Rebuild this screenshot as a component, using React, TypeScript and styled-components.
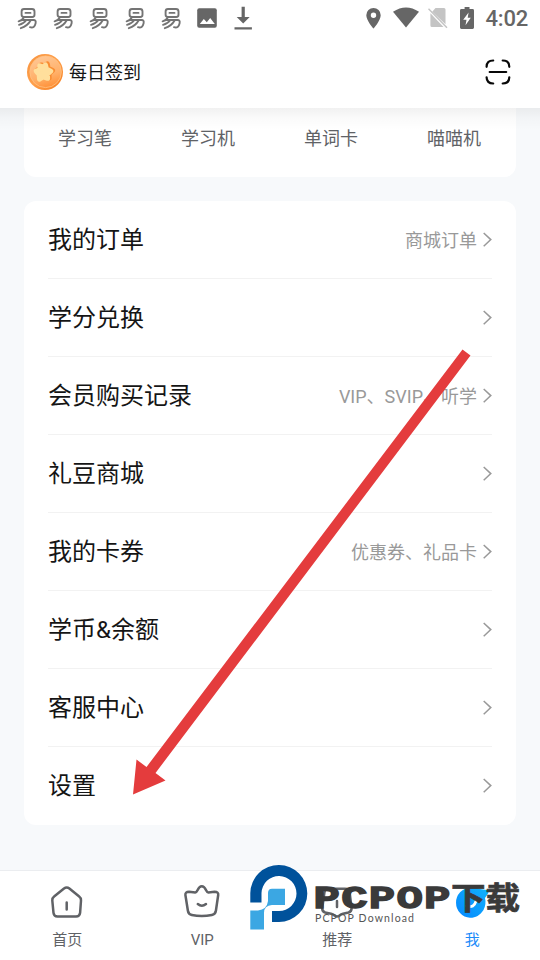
import React from "react";
import styled, { createGlobalStyle } from "styled-components";

const sans = `Roboto, "Noto Sans CJK SC", sans-serif`;

const GlobalStyle = createGlobalStyle`
  * { box-sizing: border-box; }
  body { margin: 0; background: #f7f9fb; font-family: ${sans}; }
`;

const Screen = styled.div`
  position: relative;
  display: flex;
  flex-direction: column;
  width: 540px;
  height: 960px;
  overflow: hidden;
  background: #f7f9fb;
`;

const StatusBar = styled.header`
  display: flex;
  justify-content: space-between;
  align-items: center;
  height: 36px;
  padding: 0 12px 0 15px;
  background: #fff;
  color: #666;
`;

const StatusGroup = styled.div<{ $gap: number }>`
  display: flex;
  align-items: center;
  gap: ${(p) => p.$gap}px;
`;

const Clock = styled.span`
  font-size: 22px;
  font-weight: 500;
  line-height: 36px;
  letter-spacing: -0.2px;
  margin-left: -1px;
  padding-top: 2px;
`;

const TopBar = styled.div`
  display: flex;
  align-items: center;
  height: 72px;
  padding: 0 28px 0 26px;
  background: #fff;
`;

const CheckIn = styled.span`
  flex: 1;
  margin-left: 5px;
  padding-top: 2px;
  font-size: 18px;
  line-height: 26px;
  color: #151515;
`;

const Content = styled.main`
  flex: 1;
  display: flex;
  flex-direction: column;
  gap: 24px;
  padding: 0 24px;
  position: relative;
  &::before {
    content: "";
    position: absolute;
    inset: 0 0 auto 0;
    height: 22px;
    background: linear-gradient(rgba(0, 0, 0, 0.055), rgba(0, 0, 0, 0.02) 45%, rgba(0, 0, 0, 0));
  }
`;

const Devices = styled.section`
  display: grid;
  grid-template-columns: repeat(4, 1fr);
  height: 69px;
  background: #fff;
  border-radius: 0 0 12px 12px;
`;

const Device = styled.span`
  padding: 18px 1px 0 0;
  text-align: center;
  font-size: 18px;
  line-height: 26px;
  color: #606266;
`;

const Menu = styled.section`
  padding: 0 24px;
  background: #fff;
  border-radius: 12px;
  height: 624px;
`;

const Row = styled.div`
  display: flex;
  align-items: center;
  height: 78px;
  border-bottom: 1px solid #f2f2f2;
  &:last-child { border-bottom: 0; }
`;

const RowTitle = styled.span`
  flex: 1;
  font-size: 24px;
  line-height: 36px;
  color: #151515;
`;

const RowNote = styled.span`
  margin-right: 3px;
  padding-top: 2px;
  font-size: 18px;
  line-height: 26px;
  color: #999;
`;

const TabBar = styled.nav`
  display: grid;
  grid-template-columns: repeat(4, 1fr);
  height: 90px;
  background: #fff;
  border-top: 1px solid #ebedf0;
`;

const Tab = styled.div<{ $active?: boolean }>`
  display: flex;
  flex-direction: column;
  align-items: center;
  padding: 12px 0.5px 0 0;
  font-size: 15px;
  line-height: 22px;
  color: ${(p) => (p.$active ? "#1b8bf9" : "#606266")};
  svg { margin-bottom: 6px; }
`;

const Watermark = styled.svg`
  position: absolute;
  left: 248px;
  top: 862px;
`;

const Pointer = styled.svg`
  position: absolute;
  left: 0;
  top: 0;
  pointer-events: none;
`;

const YiIcon = () => (
  <svg width="24" height="24" viewBox="0 0 24 24" fill="none" stroke="#747474" strokeWidth="1.9" strokeLinecap="round" strokeLinejoin="round">
    <path d="M9 3H17Q19.5 3 19.5 5.5V8.8Q19.5 11 17.2 11H9Q6.6 11 6.6 8.8V5.5Q6.6 3 9 3ZM10.5 6.9H15.5" />
    <path d="M8.8 11.5Q7.4 14.3 3.6 15.3M7.5 14H18.5Q21.3 14 20.6 17.2Q19.5 22.6 15 21.2M11 14.5Q8.8 17.6 4 18.8M15.6 14.5Q12.5 20 5.8 22.2" />
  </svg>
);

const ImageIcon = () => (
  <svg width="24" height="24" viewBox="0 0 24 24">
    <rect x="2.2" y="2.2" width="19.6" height="19.6" rx="2" fill="#666" />
    <path d="M4.8 18L8.8 12.9L11.8 16.2L15.2 12L19.8 18Z" fill="#fff" />
  </svg>
);

const DownloadIcon = () => (
  <svg width="24" height="24" viewBox="0 0 24 24" fill="#666">
    <path d="M10.6 0.8H13.8V11H18.7L12.2 17.5L5.7 11H10.6ZM3.5 21.2H20.9V23.6H3.5Z" />
  </svg>
);

const PinIcon = () => (
  <svg width="15" height="22" viewBox="0 0 15 22">
    <path fill="#666" fillRule="evenodd" d="M7.5 1A7.2 7.2 0 0 0 .3 8.2C.3 13.5 7.5 21.5 7.5 21.5S14.7 13.5 14.7 8.2A7.2 7.2 0 0 0 7.5 1ZM7.5 5.5A2.7 2.7 0 1 1 7.5 10.9A2.7 2.7 0 0 1 7.5 5.5Z" />
  </svg>
);

const WifiIcon = () => (
  <svg width="26" height="22" viewBox="0 0 26 22">
    <path fill="#666" d="M0 4.8Q13-4 26 4.8L13 20.5Z" />
  </svg>
);

const SimOffSvg = styled.svg`
  margin-left: -3px;
`;

const SimOffIcon = () => (
  <SimOffSvg width="20" height="22" viewBox="0 0 20 22">
    <path fill="#c4c4c4" d="M7.5 1H16Q17.5 1 17.5 2.5V17.3L4.2 4.8ZM2.4 6.2L15.5 20H4Q2.4 20 2.4 18.4Z" />
    <path stroke="#c4c4c4" strokeWidth="1.4" d="M.5 1.8L19 20.7" />
  </SimOffSvg>
);

const BatteryIcon = () => (
  <svg width="14" height="22" viewBox="0 0 14 22">
    <path fill="#666" d="M4.6 0H9.5V2H12.6Q14 2 14 3.4V20.6Q14 22 12.6 22H1.4Q0 22 0 20.6V3.4Q0 2 1.4 2H4.6Z" />
    <path fill="#fff" d="M8.6 5.5L3.2 12.8H6.5L5.5 18.2L10.8 10.8H7.7Z" />
  </svg>
);

const CoinIcon = () => (
  <svg width="38" height="38" viewBox="0 0 38 38">
    <defs>
      <linearGradient id="coinRim" x1="0" y1="0" x2="1" y2="1">
        <stop offset="0" stopColor="#f7943f" />
        <stop offset="0.5" stopColor="#ffa04c" />
        <stop offset="1" stopColor="#f57c1c" />
      </linearGradient>
      <linearGradient id="coinFace" x1="0.4" y1="0" x2="0.7" y2="1">
        <stop offset="0" stopColor="#ffc693" />
        <stop offset="0.6" stopColor="#ffb069" />
        <stop offset="1" stopColor="#ff8f35" />
      </linearGradient>
    </defs>
    <circle cx="19" cy="19" r="18" fill="url(#coinRim)" />
    <circle cx="19.6" cy="18.8" r="15.8" fill="url(#coinFace)" stroke="#ffc183" strokeWidth="0.8" />
    <path transform="translate(1 -0.6)" fill="#f98d32" stroke="#f98d32" strokeWidth="5" strokeLinejoin="round" d="M20.3 11.5L21.2 15.8L25.6 18L22 21.2L22.2 25.5L17.7 23.8L13.5 26L13.2 21.2L10.2 17.7L14.4 16.2L14.2 12.5L17.2 13.7Z" />
    <path fill="#ffdf9c" stroke="#ffdf9c" strokeWidth="5" strokeLinejoin="round" d="M19.5 12L20.4 16L24.8 18.2L21.4 21.2L21.6 25.3L17.4 23.8L13.5 26.2L13.2 21.5L10.2 18L14.4 16.5L13.8 12.8L17 14Z" />
  </svg>
);

const ScanIcon = () => (
  <svg width="28" height="28" viewBox="0 0 28 28" fill="none" stroke="#080808" strokeWidth="2.2" strokeLinecap="round">
    <path d="M2.6 8.8Q2.6 2.5 9.2 2.5M18.7 2.5Q25.3 2.5 25.3 8.8M25.3 19.3Q25.3 25.5 18.7 25.5M9.2 25.5Q2.6 25.5 2.6 19.3M5.7 14H22.2" />
  </svg>
);

const Chevron = () => (
  <svg width="12" height="18" viewBox="0 0 12 18" fill="none" stroke="#999" strokeWidth="1.5">
    <path d="M3.7 2L10.8 8.6L3.7 15.2" />
  </svg>
);

const TabSvg = styled.svg.attrs({ width: 40, height: 40, viewBox: "0 0 40 40", fill: "none" })`
  stroke: #606266;
  stroke-width: 2.5;
  stroke-linecap: round;
  stroke-linejoin: round;
`;

const HomeIcon = () => (
  <TabSvg>
    <path d="M17 5.6Q19.7 3.5 22.4 5.6L32.2 13.5Q34.2 15 34 17.5L33.1 29.8Q32.6 33.5 29.1 33.5H10.4Q7 33.5 6.5 29.8L5.3 17.5Q5.1 15 7.1 13.5ZM19.7 19.5V26.5" />
  </TabSvg>
);

const VipIcon = () => (
  <TabSvg>
    <path d="M13.2 9.4Q14.6 9.3 15.5 7.3Q17.3 3.2 19.8 3.2Q22.3 3.2 24.1 7.3Q25 9.3 26.4 9.4L32.5 8.8Q36.7 8.8 36.2 12L33.9 27.8Q33.4 31.2 29.8 32Q19.8 34.2 9.8 32Q6.4 31.2 5.9 27.8L3.4 12Q3.1 8.8 7 8.8ZM15.8 21Q19.8 24.4 24 21" />
  </TabSvg>
);

const RecommendIcon = () => (
  <TabSvg>
    <path d="M12 5.8H28Q32 5.8 32.6 9.5L34.6 25Q34.7 28.5 31.5 29.5L26 30.7Q24 31.2 22.5 32.5Q20 34.5 17.5 32.5Q16 31.2 14 30.7L8.2 29.5Q5 28.5 5.2 25L7.4 9.5Q8 5.8 12 5.8ZM20 18V24" />
  </TabSvg>
);

const MeIcon = () => (
  <svg width="40" height="40" viewBox="0 0 40 40">
    <defs>
      <linearGradient id="me" x1="0" y1="1" x2="1" y2="0">
        <stop offset="0" stopColor="#0587ff" />
        <stop offset="1" stopColor="#12b4fa" />
      </linearGradient>
    </defs>
    <path fill="url(#me)" d="M18 4.5Q23 3.3 28 6L35 7Q37.5 8 36 10.5L33 15Q34.5 21 31.5 27C28 32.5 23 35 18 34.8A15.2 15.2 0 0 1 18 4.5Z" />
    <path d="M15 23Q22 25.5 24 18" fill="none" stroke="#fff" strokeWidth="2.8" strokeLinecap="round" />
  </svg>
);

const devices = ["学习笔", "学习机", "单词卡", "喵喵机"];

const rows: { title: string; note?: string }[] = [
  { title: "我的订单", note: "商城订单" },
  { title: "学分兑换" },
  { title: "会员购买记录", note: "VIP、SVIP、听学" },
  { title: "礼豆商城" },
  { title: "我的卡券", note: "优惠券、礼品卡" },
  { title: "学币&余额" },
  { title: "客服中心" },
  { title: "设置" },
];

export default function App() {
  return (
    <Screen>
      <GlobalStyle />
      <StatusBar>
        <StatusGroup $gap={12}>
          {[0, 1, 2, 3, 4].map((i) => <YiIcon key={i} />)}
          <ImageIcon />
          <DownloadIcon />
        </StatusGroup>
        <StatusGroup $gap={12}>
          <PinIcon />
          <WifiIcon />
          <SimOffIcon />
          <BatteryIcon />
          <Clock>4:02</Clock>
        </StatusGroup>
      </StatusBar>
      <TopBar>
        <CoinIcon />
        <CheckIn>每日签到</CheckIn>
        <ScanIcon />
      </TopBar>
      <Content>
        <Devices>
          {devices.map((name) => <Device key={name}>{name}</Device>)}
        </Devices>
        <Menu>
          {rows.map((row) => (
            <Row key={row.title}>
              <RowTitle>{row.title}</RowTitle>
              {row.note && <RowNote>{row.note}</RowNote>}
              <Chevron />
            </Row>
          ))}
        </Menu>
      </Content>
      <TabBar>
        <Tab><HomeIcon />首页</Tab>
        <Tab><VipIcon />VIP</Tab>
        <Tab><RecommendIcon />推荐</Tab>
        <Tab $active><MeIcon />我</Tab>
      </TabBar>
      <Watermark width="280" height="72" viewBox="248 862 280 72">
        <path fill="#00529b" d="M250.3 902.5V893A28.5 28.5 0 1 1 279 922H272V911H279A17.5 17.5 0 1 0 261.5 893V902.5Z" />
        <path fill="#3ba7e3" d="M272 888.7H285V905H272Q264 905.5 264 913V929.5H250.3V910.5H258Q267 909.5 268 901V893Q268 888.7 272 888.7Z" />
        <g fill="#3a3a3a">
          <text transform="translate(313.5 907.5) scale(1.42 1)" fontFamily={'"Liberation Mono", monospace'} fontWeight="700" fontSize="31" stroke="#3a3a3a" strokeWidth="1.3" textLength="96.5" lengthAdjust="spacing">PCPOP</text>
          <text x="451" y="908.5" fontFamily={'"Noto Sans CJK SC", sans-serif'} fontWeight="700" fontSize="31" stroke="#3a3a3a" strokeWidth="0.7" textLength="69" lengthAdjust="spacingAndGlyphs">下载</text>
        </g>
        <text x="315" y="921.5" fill="#555" fontFamily={'Lato, sans-serif'} fontSize="10.5" textLength="99">PCPOP Download</text>
      </Watermark>
      <Pointer width="540" height="960" viewBox="0 0 540 960">
        <path fill="#e43c3d" d="M462.5 349.5L470.5 355.5L155.5 773L165.5 780.5L133 794.5L136.5 759.5L146.5 767Z" />
      </Pointer>
    </Screen>
  );
}
